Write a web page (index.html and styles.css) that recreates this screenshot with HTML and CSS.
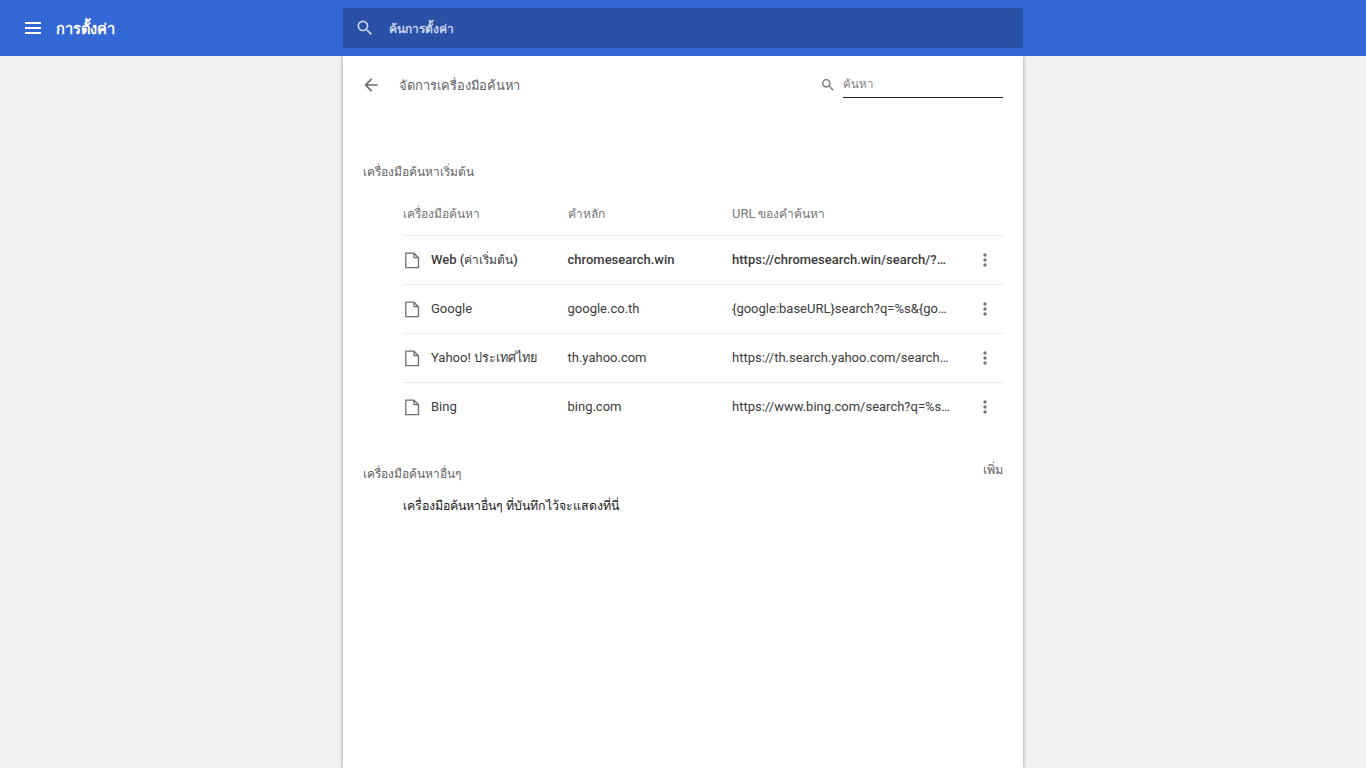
FILE: index.html
```html
<!DOCTYPE html>
<html lang="th">
<head>
    <meta charset="UTF-8">
    <meta name="viewport" content="width=device-width, initial-scale=1.0">
    <title>การตั้งค่า</title>
    <link rel="stylesheet" href="styles.css">
</head>
<body>
    <header class="topbar">
        <div class="topbar-left">
            <svg class="menu-icon" width="24" height="24" viewBox="0 0 24 24"><path d="M4 6h16v2H4zm0 5h16v2H4zm0 5h16v2H4z"/></svg>
            <h1 class="topbar-title">การตั้งค่า</h1>
        </div>
        <div class="topbar-search">
            <svg class="topbar-search-icon" width="20" height="20" viewBox="0 0 24 24"><path d="M15.5 14h-.79l-.28-.27A6.47 6.47 0 0 0 16 9.5 6.5 6.5 0 1 0 9.5 16c1.61 0 3.09-.59 4.23-1.57l.27.28v.79l5 4.99L20.49 19l-4.99-5zm-6 0C7.01 14 5 11.99 5 9.5S7.01 5 9.5 5 14 7.01 14 9.5 11.99 14 9.5 14z"/></svg>
            <span class="topbar-search-text">ค้นการตั้งค่า</span>
        </div>
    </header>

    <main class="card">
        <div class="subpage-head">
            <svg class="back-icon" width="20" height="20" viewBox="0 0 24 24"><path d="M20 11H7.83l5.59-5.59L12 4l-8 8 8 8 1.41-1.41L7.83 13H20v-2z"/></svg>
            <span class="subpage-title">จัดการเครื่องมือค้นหา</span>
            <div class="subpage-search">
                <svg class="subpage-search-icon" width="16" height="16" viewBox="0 0 24 24"><path d="M15.5 14h-.79l-.28-.27A6.47 6.47 0 0 0 16 9.5 6.5 6.5 0 1 0 9.5 16c1.61 0 3.09-.59 4.23-1.57l.27.28v.79l5 4.99L20.49 19l-4.99-5zm-6 0C7.01 14 5 11.99 5 9.5S7.01 5 9.5 5 14 7.01 14 9.5 11.99 14 9.5 14z"/></svg>
                <span class="subpage-search-input">ค้นหา</span>
            </div>
        </div>

        <h2 class="section-label first-label">เครื่องมือค้นหาเริ่มต้น</h2>

        <div class="engine-table">
            <div class="engine-row engine-head">
                <span class="col-name th">เครื่องมือค้นหา</span>
                <span class="col-key th">คำหลัก</span>
                <span class="col-url"><span class="url-latin">URL</span> ของคำค้นหา</span>
            </div>
            <div class="engine-row is-default">
                <span class="col-name">
                    <svg class="file-icon" width="20" height="20" viewBox="0 0 20 20"><path d="M2.8 3.2H11l4.5 4.5v10H2.8zM11 3.2v4.5h4.5"/></svg>
                    <span>Web (<span class="th">ค่าเริ่มต้น</span>)</span>
                </span>
                <span class="col-key">chromesearch.win</span>
                <span class="col-url">https://chromesearch.win/search/?q=%s&amp;from=web</span>
                <svg class="dots" width="20" height="20" viewBox="0 0 24 24"><path d="M12 8a2 2 0 1 0 0-4 2 2 0 0 0 0 4zm0 2a2 2 0 1 0 0 4 2 2 0 0 0 0-4zm0 6a2 2 0 1 0 0 4 2 2 0 0 0 0-4z"/></svg>
            </div>
            <div class="engine-row">
                <span class="col-name">
                    <svg class="file-icon" width="20" height="20" viewBox="0 0 20 20"><path d="M2.8 3.2H11l4.5 4.5v10H2.8zM11 3.2v4.5h4.5"/></svg>
                    <span>Google</span>
                </span>
                <span class="col-key">google.co.th</span>
                <span class="col-url">{google:baseURL}search?q=%s&amp;{google:RLZ}</span>
                <svg class="dots" width="20" height="20" viewBox="0 0 24 24"><path d="M12 8a2 2 0 1 0 0-4 2 2 0 0 0 0 4zm0 2a2 2 0 1 0 0 4 2 2 0 0 0 0-4zm0 6a2 2 0 1 0 0 4 2 2 0 0 0 0-4z"/></svg>
            </div>
            <div class="engine-row">
                <span class="col-name">
                    <svg class="file-icon" width="20" height="20" viewBox="0 0 20 20"><path d="M2.8 3.2H11l4.5 4.5v10H2.8zM11 3.2v4.5h4.5"/></svg>
                    <span>Yahoo! <span class="th-wide">ประเทศไทย</span></span>
                </span>
                <span class="col-key">th.yahoo.com</span>
                <span class="col-url">https://th.search.yahoo.com/search?ei=UTF-8</span>
                <svg class="dots" width="20" height="20" viewBox="0 0 24 24"><path d="M12 8a2 2 0 1 0 0-4 2 2 0 0 0 0 4zm0 2a2 2 0 1 0 0 4 2 2 0 0 0 0-4zm0 6a2 2 0 1 0 0 4 2 2 0 0 0 0-4z"/></svg>
            </div>
            <div class="engine-row">
                <span class="col-name">
                    <svg class="file-icon" width="20" height="20" viewBox="0 0 20 20"><path d="M2.8 3.2H11l4.5 4.5v10H2.8zM11 3.2v4.5h4.5"/></svg>
                    <span>Bing</span>
                </span>
                <span class="col-key">bing.com</span>
                <span class="col-url">https://www.bing.com/search?q=%s&amp;PC=U316</span>
                <svg class="dots" width="20" height="20" viewBox="0 0 24 24"><path d="M12 8a2 2 0 1 0 0-4 2 2 0 0 0 0 4zm0 2a2 2 0 1 0 0 4 2 2 0 0 0 0-4zm0 6a2 2 0 1 0 0 4 2 2 0 0 0 0-4z"/></svg>
            </div>
        </div>

        <div class="other-head">
            <h2 class="section-label">เครื่องมือค้นหาอื่นๆ</h2>
            <span class="add-link">เพิ่ม</span>
        </div>
        <p class="other-empty">เครื่องมือค้นหาอื่นๆ ที่บันทึกไว้จะแสดงที่นี่</p>
    </main>
</body>
</html>
```

FILE: styles.css
```css
* {
    box-sizing: border-box;
}
html, body {
    height: 100%;
}
body {
    margin: 0;
    overflow: hidden;
    display: flex;
    flex-direction: column;
    background-color: #f1f1f1;
    font-family: Roboto, "Noto Sans", sans-serif;
    font-size: 13px;
    color: #3c3c3c;
}
.th {
    font-size: 12px;
}
.th-wide {
    font-size: 12.7px;
    line-height: 1;
}

.topbar {
    height: 56px;
    flex-shrink: 0;
    display: flex;
    align-items: center;
    justify-content: center;
    background-color: #3367d6;
    position: relative;
}
.topbar-left {
    position: absolute;
    left: 21px;
    top: 0;
    height: 56px;
    display: flex;
    align-items: center;
    gap: 11px;
}
.menu-icon {
    fill: #fff;
}
.topbar-title {
    margin: 0;
    font-size: 14.6px;
    font-weight: 700;
    color: #fff;
}
.topbar-search {
    width: 680px;
    height: 40px;
    display: flex;
    align-items: center;
    padding-left: 12px;
    gap: 14px;
    border-radius: 2px;
    background-color: #2a51a6;
}
.topbar-search-icon {
    fill: #c5d2ec;
}
.topbar-search-text {
    color: #c5d2ec;
    font-size: 12px;
    font-weight: 700;
}

.card {
    width: 680px;
    flex: 1;
    margin: 0 auto;
    padding: 0 20px;
    background-color: #fff;
    box-shadow: 0 0 4px rgba(0, 0, 0, 0.4);
}
.subpage-head {
    height: 58px;
    display: flex;
    align-items: center;
}
.back-icon {
    fill: #6e6e6e;
    margin-left: -2px;
}
.subpage-title {
    margin-left: 18px;
    font-size: 12.9px;
    color: #5f6368;
}
.subpage-search {
    margin-left: auto;
    display: flex;
    align-items: center;
    gap: 7px;
}
.subpage-search-icon {
    fill: #757575;
}
.subpage-search-input {
    width: 160px;
    height: 28px;
    padding-top: 5px;
    margin-bottom: 2px;
    border-bottom: 1px solid #212121;
    color: #808080;
    font-size: 11.5px;
}

.section-label {
    margin: 0;
    font-size: 12px;
    font-weight: 400;
    color: #646464;
}
.first-label {
    margin-top: 48px;
    line-height: 20px;
}

.engine-table {
    margin-left: 40px;
    margin-top: 8px;
}
.engine-row {
    height: 49px;
    display: flex;
    align-items: center;
    border-top: 1px solid #ececec;
    padding-bottom: 2px;
}
.engine-head {
    height: 45px;
    border-top: 0;
    padding-bottom: 0;
    padding-top: 2px;
    color: #757575;
}
.is-default {
    font-weight: 500;
}
.col-name {
    width: 164.5px;
    display: flex;
    align-items: center;
    gap: 8px;
    white-space: nowrap;
}
.col-key {
    width: 164.5px;
}
.col-url {
    width: 220px;
    white-space: nowrap;
    overflow: hidden;
    text-overflow: ellipsis;
    font-size: 13px;
}
.engine-head .col-url {
    font-size: 12px;
}
.url-latin {
    font-size: 13px;
}
.file-icon {
    margin-top: 2px;
    fill: none;
    stroke: #6e6e6e;
    stroke-width: 1.3;
}
.dots {
    margin-left: 23px;
    margin-top: 2px;
    fill: #757575;
}

.other-head {
    margin-top: 30px;
    display: flex;
    justify-content: space-between;
    align-items: flex-start;
    height: 35px;
}
.other-head .section-label {
    margin-top: 3px;
}
.add-link {
    color: #646464;
    font-size: 12.5px;
    margin-top: -1px;
}
.other-empty {
    margin: 0 0 0 40px;
    font-size: 12.4px;
    line-height: 20px;
    color: #212121;
}
```
